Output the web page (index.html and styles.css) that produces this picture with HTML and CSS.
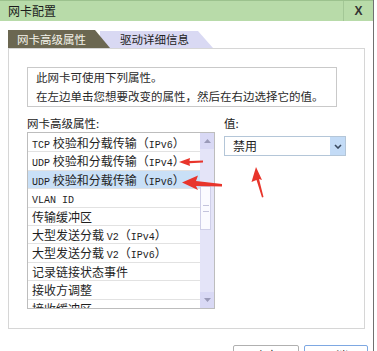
FILE: index.html
```html
<!DOCTYPE html>
<html lang="zh-CN">
<head>
  <meta charset="UTF-8" />
  <title>网卡配置</title>
  <link rel="stylesheet" href="styles.css">
</head>
<body>
  <div class="window">
    <div class="titlebar">
      <span class="title">网卡配置</span>
      <span class="close">X</span>
    </div>

    <div class="tabs">
      <div class="tab active">网卡高级属性</div>
      <div class="tab">驱动详细信息</div>
    </div>

    <div class="panel">
      <div class="info">
        <p>此网卡可使用下列属性。</p>
        <p>在左边单击您想要改变的属性，然后在右边选择它的值。</p>
      </div>

      <div class="cols">
        <div class="left">
          <div class="label">网卡高级属性:</div>
          <div class="listbox">
            <ul class="items">
              <li><span class="en">TCP</span> 校验和分载传输（<span class="en">IPv6</span>）</li>
              <li><span class="en">UDP</span> 校验和分载传输（<span class="en">IPv4</span>）</li>
              <li class="selected"><span class="en">UDP</span> 校验和分载传输（<span class="en">IPv6</span>）</li>
              <li><span class="en">VLAN ID</span></li>
              <li>传输缓冲区</li>
              <li>大型发送分载 <span class="en">V2</span>（<span class="en">IPv4</span>）</li>
              <li>大型发送分载 <span class="en">V2</span>（<span class="en">IPv6</span>）</li>
              <li>记录链接状态事件</li>
              <li>接收方调整</li>
              <li>接收缓冲区</li>
            </ul>
            <div class="scrollbar">
              <div class="sb-btn">
                <svg width="7" height="4" viewBox="0 0 7 4"><path d="M0 4 L3.5 0 L7 4 Z" fill="#9a9ab8"/></svg>
              </div>
              <div class="sb-track">
                <div class="sb-thumb"><span class="grip"></span></div>
              </div>
              <div class="sb-btn">
                <svg width="7" height="4" viewBox="0 0 7 4"><path d="M0 0 L3.5 4 L7 0 Z" fill="#9a9ab8"/></svg>
              </div>
            </div>
          </div>
        </div>

        <div class="right">
          <div class="label">值:</div>
          <div class="select">
            <span class="value">禁用</span>
            <span class="drop">
              <svg width="8" height="5" viewBox="0 0 8 5"><path d="M1 1 L4 4 L7 1" fill="none" stroke="#3a4a60" stroke-width="1.6"/></svg>
            </span>
          </div>
        </div>
      </div>
    </div>

    <div class="buttons">
      <button class="btn">确定</button>
      <button class="btn primary">取消</button>
    </div>
  </div>

  <!-- red annotation arrows drawn over the dialog -->
  <svg class="marks" width="377" height="351" viewBox="0 0 377 351">
    <g fill="#e8352b">
      <path d="M179 162 L190 158 L189.5 161 L203 160.5 L203 162.5 L189.5 163.2 L190 166 Z"/>
      <path d="M182 182.5 L198 175.5 L196 181 L222 184 L222 186.5 L196 186 L198 190 Z"/>
      <path d="M256 167 L262 180 L259 179 L263.5 197 L262 197.5 L256.5 180 L251.5 182 Z"/>
    </g>
  </svg>
</body>
</html>
```

FILE: styles.css
```css
body {
  margin: 0;
  background: #fff;
  font-family: "Noto Sans CJK SC", sans-serif;
  color: #222;
  overflow: hidden;
}
.window {
  width: 373px;
  height: 351px;
  border-right: 1px solid #707070;
  background: #fff;
  overflow: hidden;
}
.titlebar {
  display: flex;
  height: 20px;
  background: #b8dba9;
  border-top: 1px solid #9cc28e;
}
.title {
  flex: 1;
  padding-left: 8px;
  font-size: 12px;
  line-height: 20px;
  color: #1b1b1b;
}
.close {
  width: 29px;
  border-left: 1px solid #a3c796;
  text-align: center;
  font-family: "Liberation Sans", sans-serif;
  font-weight: bold;
  font-size: 12px;
  line-height: 21px;
  color: #333;
}
.tabs {
  display: flex;
  align-items: flex-end;
  height: 18px;
  margin-top: 9px;
  padding-left: 8px;
}
.tab {
  font-size: 11.5px;
  line-height: 17px;
  height: 17px;
}
.tab.active {
  position: relative;
  z-index: 1;
  width: 102px;
  height: 18px;
  line-height: 18px;
  padding-left: 9px;
  box-sizing: border-box;
  background: #6b6751;
  color: #f4f3ea;
  clip-path: polygon(0 0, 87px 0, 100% 100%, 0 100%);
}
.tab:not(.active) {
  width: 113px;
  margin-left: -10px;
  padding-left: 20px;
  box-sizing: border-box;
  background: #d9d9f3;
  color: #222;
  clip-path: polygon(0 0, 98px 0, 100% 100%, 0 100%);
}
.panel {
  margin-left: 8px;
  width: 357px;
  height: 281px;
  box-sizing: border-box;
  border: 1px solid #d6d6d6;
  padding: 18px 0 0 18px;
}
.info {
  width: 310px;
  height: 40px;
  box-sizing: border-box;
  border: 1px solid #c9c9c9;
  padding: 0 8px;
}
.info p {
  margin: 0;
  font-size: 11.5px;
  line-height: 19px;
  color: #2a2a2a;
}
.cols {
  display: flex;
  margin-top: 10px;
}
.label {
  font-size: 11.5px;
  line-height: 13px;
  height: 13px;
}
.listbox {
  display: flex;
  width: 188px;
  height: 177px;
  margin-top: 2px;
  box-sizing: border-box;
  border: 1px solid #bdbdbd;
  overflow: hidden;
}
.items {
  flex: 1;
  list-style: none;
  margin: 0;
  padding: 1px 0 0;
  overflow: hidden;
}
.items li {
  height: 17.4px;
  line-height: 17.4px;
  border-bottom: 1px solid #e2e2e2;
  padding-left: 4px;
  font-size: 12px;
  white-space: nowrap;
  color: #1e1e1e;
}
.items li.selected {
  background: #c9e0f7;
}
.en {
  font-family: "Liberation Mono", monospace;
  font-size: 10px;
}
.scrollbar {
  display: flex;
  flex-direction: column;
  width: 14px;
  background: #e4e4f8;
}
.sb-btn {
  display: flex;
  align-items: center;
  justify-content: center;
  height: 16px;
  background: #d9d9f5;
}
.sb-track {
  flex: 1;
  padding-top: 37px;
}
.sb-thumb {
  display: flex;
  align-items: center;
  justify-content: center;
  width: 11px;
  height: 44px;
  box-sizing: border-box;
  background: #fbfbff;
  border: 1px solid #cfcfe8;
}
.grip {
  width: 6px;
  height: 5px;
  border-top: 1px solid #c4c4dc;
  border-bottom: 1px solid #c4c4dc;
}
.right {
  margin-left: 9px;
}
.select {
  display: flex;
  width: 122px;
  height: 20px;
  margin-top: 6px;
  box-sizing: border-box;
  border: 1px solid #b4c6d8;
}
.value {
  flex: 1;
  padding-left: 8px;
  font-size: 12px;
  line-height: 18px;
}
.drop {
  display: flex;
  align-items: center;
  justify-content: center;
  width: 15px;
  background: #c3dbf6;
}
.buttons {
  display: flex;
  justify-content: flex-end;
  gap: 5px;
  margin-top: 16px;
  padding-right: 5px;
}
.btn {
  width: 66px;
  height: 22px;
  padding: 0;
  border: 1px solid #b0b0b0;
  border-radius: 2px;
  background: #fff;
  font-family: "Noto Sans CJK SC", sans-serif;
  font-size: 12px;
  line-height: 20px;
  color: #222;
}
.btn.primary {
  width: 64px;
  border-color: #7ea8e2;
}
.marks {
  position: absolute;
  top: 0;
  left: 0;
  pointer-events: none;
}
```
